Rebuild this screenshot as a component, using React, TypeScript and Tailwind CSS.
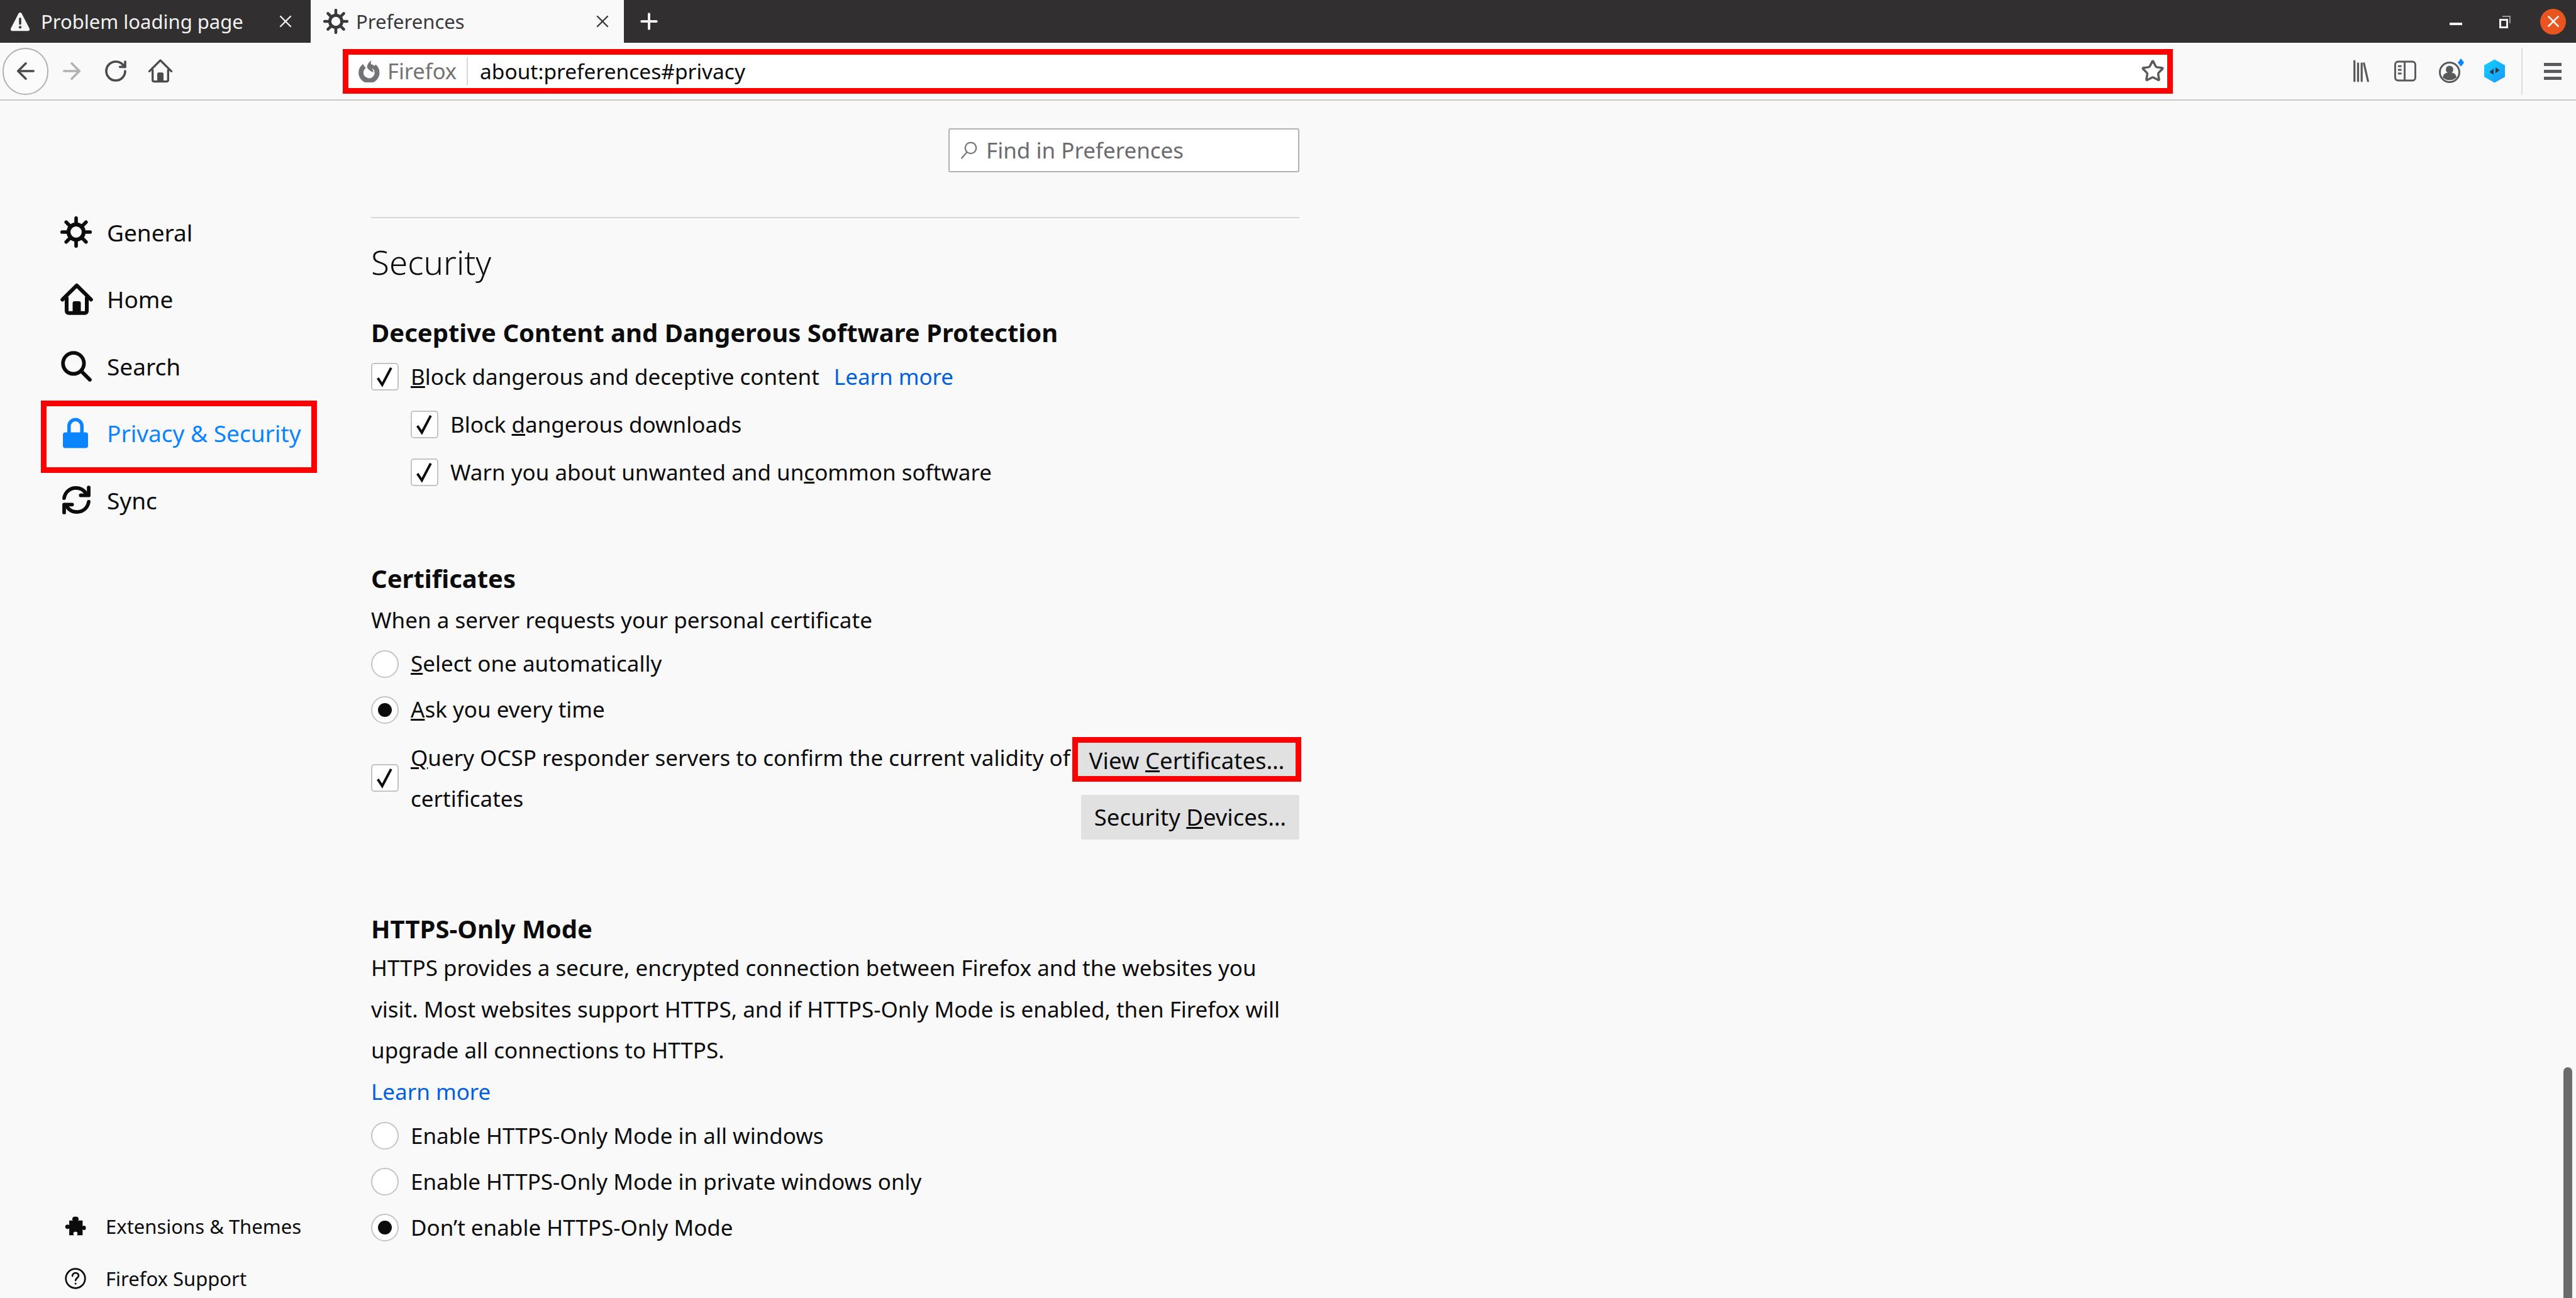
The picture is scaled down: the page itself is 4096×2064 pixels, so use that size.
import React from "react";
import { ArrowLeft, ArrowRight, RotateCw, Star, Plus, X } from "lucide-react";

function GearIcon({ className }: { className?: string }) {
  const rays = [0, 45, 90, 135, 180, 225, 270, 315];
  return (
    <svg viewBox="0 0 24 24" fill="none" stroke="currentColor" className={className}>
      <circle cx="12" cy="12" r="5.800" strokeWidth="3" />
      {rays.map((a) => (
        <line key={a} x1="12" y1="4.500" x2="12" y2="1.300" strokeWidth="2.700" strokeLinecap="round" transform={`rotate(${a} 12 12)`} />
      ))}
    </svg>
  );
}

function HomeIcon({ className, width = 2.8 }: { className?: string; width?: number }) {
  return (
    <svg viewBox="0 0 24 24" fill="none" stroke="currentColor" strokeWidth={width} strokeLinecap="round" strokeLinejoin="round" className={className}>
      <path d="M1.500 12.200 12 1.800l10.500 10.400" />
      <path d="M4.600 11v9.400c0 1 .6 1.600 1.600 1.600h11.600c1 0 1.600-.6 1.600-1.600V11" />
      <path fill="currentColor" strokeWidth="1" d="M9.500 21.500v-6.600c0-.6.4-1 1-1h3c.6 0 1 .4 1 1v6.600z" />
    </svg>
  );
}

function SearchIcon({ className }: { className?: string }) {
  return (
    <svg viewBox="0 0 24 24" fill="none" stroke="currentColor" strokeWidth="2.800" strokeLinecap="round" className={className}>
      <circle cx="10" cy="10" r="8" />
      <line x1="15.800" y1="15.800" x2="22.500" y2="22.500" />
    </svg>
  );
}

function LockIcon({ className }: { className?: string }) {
  return (
    <svg viewBox="0 0 20 24" fill="currentColor" className={className}>
      <path d="M3.500 12V6.500a6.500 6.500 0 0 1 13 0V12h-2.800V6.500a3.700 3.700 0 0 0-7.400 0V12z" />
      <rect x="0" y="11.500" width="20" height="12.500" rx="2" />
    </svg>
  );
}

function SyncIcon({ className }: { className?: string }) {
  return (
    <svg viewBox="0 0 24 24" fill="none" stroke="currentColor" strokeWidth="3" strokeLinecap="round" strokeLinejoin="round" className={className}>
      <path d="M1.800 10.500C2.600 5.400 6.600 2 11.600 2c3.400 0 6.200 1.500 8 4" />
      <path d="M22.200 1.600v6.600h-6.600" />
      <path d="M22.200 13.500c-.8 5.100-4.800 8.500-9.800 8.500-3.400 0-6.200-1.500-8-4" />
      <path d="M1.800 22.400v-6.600h6.600" />
    </svg>
  );
}

function PuzzleIcon({ className }: { className?: string }) {
  return (
    <svg viewBox="0 0 24 24" fill="currentColor" className={className}>
      <path d="M9 5.500H5v5.200c-2-1.300-4.500-.6-4.500 1.800S3 15.600 5 14.300V22h5.300c-1.300-2-.6-4 1.700-4s3 2 1.700 4H20v-6.400c2 1.300 3.700.5 3.700-1.900S22 10.600 20 11.800V5.500h-5c1.300-2 .5-4.500-3-4.500S7.700 3.500 9 5.500z" />
    </svg>
  );
}

function HelpIcon({ className }: { className?: string }) {
  return (
    <svg viewBox="0 0 24 24" fill="none" stroke="currentColor" strokeWidth="1.900" strokeLinecap="round" className={className}>
      <circle cx="12" cy="12" r="10.800" />
      <path d="M8.600 9.200c0-2.200 1.500-3.500 3.500-3.500s3.400 1.300 3.400 3.100c0 2.600-3.400 2.900-3.400 5.400" />
      <circle cx="12.100" cy="17.800" r="1" fill="currentColor" stroke="none" />
    </svg>
  );
}

function WarningIcon({ className }: { className?: string }) {
  return (
    <svg viewBox="0 0 24 24" className={className}>
      <path fill="#f4f4f4" d="M12 1.500c.9 0 1.600.5 2 1.300l9 17.500c.8 1.500-.2 3.200-1.900 3.200H2.900c-1.700 0-2.700-1.700-1.900-3.200l9-17.500c.4-.8 1.100-1.300 2-1.300z" />
      <rect x="10.700" y="7.500" width="2.600" height="8.500" rx="1.200" fill="#312f2f" />
      <circle cx="12" cy="19" r="1.600" fill="#312f2f" />
    </svg>
  );
}

function FirefoxMark({ className }: { className?: string }) {
  return (
    <svg viewBox="0 0 24 24" fill="none" className={className}>
      <path stroke="#737378" strokeWidth="5.500" d="M6.600 6.500A9 9 0 1 0 17.500 6.800" />
      <path fill="#737378" d="M14.500 0c-3 1.800-4.700 4.500-5 8 2 3 4.500 4.700 7.500 5.500l-1.500-4.300c2.500-.4 4 .3 5 1.500-.8-3.500-3.200-5.700-6.500-6.500-.3-1.300 0-2.800.5-4.200z" />
    </svg>
  );
}

function LibraryIcon({ className }: { className?: string }) {
  return (
    <svg viewBox="0 0 36 50" fill="none" stroke="#59595e" strokeWidth="4.500" strokeLinecap="round" className={className}>
      <line x1="3" y1="3" x2="3" y2="47" />
      <line x1="11" y1="8" x2="11" y2="47" />
      <line x1="19" y1="8" x2="19" y2="47" />
      <line x1="24" y1="8" x2="33" y2="47" />
    </svg>
  );
}

function SidebarIcon({ className }: { className?: string }) {
  return (
    <svg viewBox="0 0 36 34" fill="none" stroke="#59595e" strokeWidth="3" className={className}>
      <rect x="1.500" y="1.500" width="33" height="31" rx="5" />
      <line x1="17" y1="2" x2="17" y2="32" />
      <line x1="6" y1="9" x2="12" y2="9" />
      <line x1="6" y1="15" x2="12" y2="15" />
      <line x1="6" y1="21" x2="12" y2="21" />
    </svg>
  );
}

function AccountIcon({ className }: { className?: string }) {
  return (
    <svg viewBox="0 0 40 40" className={className}>
      <circle cx="17" cy="22" r="15.500" fill="none" stroke="#59595e" strokeWidth="3" />
      <circle cx="17" cy="17.500" r="6" fill="#59595e" />
      <path fill="#59595e" d="M6 30c1-6 6-8 11-8s10 2 11 8c-3 3-7 4.500-11 4.500S9 33 6 30z" />
      <path fill="#0a84ff" d="M35 0l5 6.500L35 13l-5-6.500z" />
    </svg>
  );
}

function ExtensionIcon({ className }: { className?: string }) {
  return (
    <svg viewBox="0 0 34 38" className={className}>
      <defs>
        <linearGradient id="extGrad" x1="0" y1="0" x2="1" y2="1">
          <stop offset="0%" stopColor="#12d4ff" />
          <stop offset="100%" stopColor="#1a94ff" />
        </linearGradient>
      </defs>
      <path fill="url(#extGrad)" d="M17 0l17 9.500v19L17 38 0 28.500v-19z" />
      <path fill="#2f3a44" d="M15.500 15v10l-7-4.500zM18.500 13l7 4.500-7 5z" />
    </svg>
  );
}

function Check({ checked = true }: { checked?: boolean }) {
  return (
    <span className="flex h-[44px] w-[44px] shrink-0 items-center justify-center rounded-[5px] border-2 border-[#c4c4c6] bg-white">
      {checked && (
        <svg viewBox="0 0 24 24" fill="none" stroke="#0c0c0d" strokeWidth="2.800" className="h-[34px] w-[34px]">
          <path d="M4 13.500l5 7.500L19 2" />
        </svg>
      )}
    </span>
  );
}

function Radio({ checked = false }: { checked?: boolean }) {
  return (
    <span className="flex h-[44px] w-[44px] shrink-0 items-center justify-center rounded-full border-2 border-[#c4c4c6] bg-white">
      {checked && <span className="h-[22px] w-[22px] rounded-full bg-[#0c0c0d]" />}
    </span>
  );
}

function NavItem({ icon, label, active }: { icon: React.ReactNode; label: string; active?: boolean }) {
  return (
    <div className={`relative flex h-[106.5px] items-center text-[37px] ${active ? "text-[#0a84ff]" : "text-[#0c0c0d]"}`}>
      <span className="ml-[96px] flex w-[74px] shrink-0 items-center">{icon}</span>
      <span>{label}</span>
      {active && <div className="absolute left-[65px] top-[1px] h-[115px] w-[439px] border-[9px] border-[#ff0000]" />}
    </div>
  );
}

function OptionRow({ children, indent }: { children: React.ReactNode; indent?: boolean }) {
  return <div className={`flex h-[73px] items-center gap-[19px] whitespace-nowrap ${indent ? "pl-[63px]" : ""}`}>{children}</div>;
}

const Learn = ({ className }: { className?: string }) => <span className={`text-[#0060df] ${className ?? ""}`}>Learn more</span>;

export default function App() {
  return (
    <div className="relative flex h-[2064px] w-[4096px] flex-col overflow-hidden bg-[#f9f9fa] font-['Noto_Sans',sans-serif] text-[35px] text-[#0c0c0d]">
      {/* tab strip */}
      <div className="flex h-[68px] shrink-0 items-stretch bg-[#312f2f] text-[31px]">
        <div className="flex w-[494px] items-center pl-[16px] text-[#f2f2f2]">
          <WarningIcon className="h-[32px] w-[32px]" />
          <span className="ml-[17px] whitespace-nowrap">Problem loading page</span>
          <X className="ml-auto mr-[24px] h-[32px] w-[32px]" strokeWidth={1.800} />
        </div>
        <div className="flex w-[498px] items-center bg-[#f9f9fa] pl-[20px] text-[#38383d]">
          <GearIcon className="h-[40px] w-[40px]" />
          <span className="ml-[12px]">Preferences</span>
          <X className="ml-auto mr-[18px] h-[32px] w-[32px]" strokeWidth={1.800} />
        </div>
        <div className="flex items-center pl-[20px] text-[#f2f2f2]">
          <Plus className="h-[40px] w-[40px]" strokeWidth={2.400} />
        </div>
        <div className="ml-auto flex items-center pr-[16px]">
          <div className="mr-[59px] mt-[8px] h-[4px] w-[20px] bg-[#f2f2f2]" />
          <div className="relative mr-[51px] mt-[6px] h-[15px] w-[14px] border-[3px] border-[#f2f2f2] bg-[#312f2f]">
            <div className="absolute left-[2px] top-[-8px] h-[12px] w-[13px] border-r-2 border-t-2 border-[#999999]" />
          </div>
          <div className="flex h-[41px] w-[41px] items-center justify-center rounded-full bg-[#e95420] text-white">
            <X className="h-[30px] w-[30px]" strokeWidth={2} />
          </div>
        </div>
      </div>

      {/* toolbar */}
      <div className="flex h-[92px] shrink-0 items-center border-b-2 border-[#c9c9cb] bg-[#f9f9fa] text-[#4a4a4f]">
        <div className="ml-[4px] flex h-[75px] w-[73px] shrink-0 items-center justify-center rounded-full border-2 border-[#b1b1b3] bg-[#fbfbfb]">
          <ArrowLeft className="h-[42px] w-[42px]" strokeWidth={2} />
        </div>
        <ArrowRight className="ml-[16px] h-[42px] w-[42px] text-[#b1b1b3]" strokeWidth={2} />
        <RotateCw className="ml-[29px] h-[40px] w-[40px]" strokeWidth={2.200} />
        <HomeIcon className="ml-[31px] h-[40px] w-[40px]" width={2} />
        <div className="ml-[270px] flex h-[71px] w-[2910px] shrink-0 items-center border-[9px] border-[#ff0000] bg-white">
          <FirefoxMark className="ml-[16px] h-[36px] w-[34px] shrink-0" />
          <span className="ml-[12px] w-[108px] whitespace-nowrap text-[34.500px] text-[#737373]">Firefox</span>
          <div className="ml-[18px] h-[44px] w-[2px] bg-[#d7d7db]" />
          <span className="ml-[19px] text-[33.500px] text-[#0c0c0d]">about:preferences#privacy</span>
          <Star className="ml-auto mr-[4px] h-[38px] w-[38px] text-[#59595e]" strokeWidth={2.200} />
        </div>
        <LibraryIcon className="ml-[283px] h-[36px] w-[33px] shrink-0" />
        <SidebarIcon className="ml-[36px] h-[34px] w-[35px] shrink-0" />
        <AccountIcon className="ml-[36px] h-[40px] w-[40px] shrink-0" />
        <ExtensionIcon className="ml-[32px] h-[38px] w-[33px] shrink-0" />
        <div className="ml-[26px] h-[75px] w-[2px] bg-[#dcdcde]" />
        <div className="ml-[34px] flex h-[27px] w-[28px] shrink-0 flex-col justify-between">
          <div className="h-[5px] bg-[#59595e]" />
          <div className="h-[5px] bg-[#59595e]" />
          <div className="h-[5px] bg-[#59595e]" />
        </div>
      </div>

      {/* page body */}
      <div className="flex min-h-0 flex-1">
        <nav className="flex w-[590px] shrink-0 flex-col justify-between pt-[156px]">
          <div>
            <NavItem icon={<GearIcon className="h-[50px] w-[50px]" />} label="General" />
            <NavItem icon={<HomeIcon className="h-[52px] w-[52px]" />} label="Home" />
            <NavItem icon={<SearchIcon className="h-[50px] w-[50px]" />} label="Search" />
            <NavItem icon={<LockIcon className="ml-[4px] h-[49px] w-[40px]" />} label="Privacy & Security" active />
            <NavItem icon={<SyncIcon className="ml-[2px] h-[46px] w-[47px]" />} label="Sync" />
          </div>
          <div className="text-[31px]">
            <div className="mb-[10px] flex h-[72px] items-center pl-[103px] pt-[4px]">
              <PuzzleIcon className="h-[34px] w-[34px] shrink-0" />
              <span className="ml-[31px] whitespace-nowrap">Extensions &amp; Themes</span>
            </div>
            <div className="flex h-[70px] items-center pl-[103px] pt-[8px]">
              <HelpIcon className="h-[34px] w-[34px] shrink-0" />
              <span className="ml-[31px] whitespace-nowrap">Firefox Support</span>
            </div>
          </div>
        </nav>

        <main className="flex w-[1476px] shrink-0 flex-col">
          <div className="mt-[44px] flex h-[70px] w-[558px] shrink-0 items-center self-end rounded-[3px] border-2 border-[#b1b1b3] bg-white pl-[16px] text-[#6b6b6f]">
            <svg viewBox="0 0 24 24" fill="none" stroke="#737378" strokeWidth="1.800" strokeLinecap="round" className="h-[30px] w-[30px] shrink-0">
              <circle cx="14" cy="9" r="7" />
              <line x1="9" y1="14.500" x2="2.500" y2="22" />
            </svg>
            <span className="ml-[12px] whitespace-nowrap">Find in Preferences</span>
          </div>
          <div className="mt-[71px] h-[2px] shrink-0 bg-[#d7d7db]" />
          <h1 className="mt-[40px] h-[62px] shrink-0 text-[53px] font-light leading-[60px] text-[#0c0c0d]">Security</h1>

          <h2 className="mt-[55px] h-[50px] shrink-0 text-[40px] font-bold leading-[50px]">Deceptive Content and Dangerous Software Protection</h2>
          <div className="mt-[7px]">
            <div className="flex h-[76px] items-center gap-[19px] whitespace-nowrap">
              <Check />
              <span>
                <span className="underline">B</span>lock dangerous and deceptive content
              </span>
              <Learn className="ml-[4px]" />
            </div>
            <div className="flex h-[76px] items-center gap-[19px] whitespace-nowrap pl-[63px]">
              <Check />
              <span>
                Block <span className="underline">d</span>angerous downloads
              </span>
            </div>
            <div className="flex h-[76px] items-center gap-[19px] whitespace-nowrap pl-[63px]">
              <Check />
              <span>
                Warn you about unwanted and un<span className="underline">c</span>ommon software
              </span>
            </div>
          </div>

          <h2 className="mt-[106px] h-[50px] shrink-0 text-[40px] font-bold leading-[50px]">Certificates</h2>
          <p className="mt-[16px] h-[50px] shrink-0 leading-[50px]">When a server requests your personal certificate</p>
          <div className="mt-[8px]">
            <OptionRow>
              <Radio />
              <span>
                <span className="underline">S</span>elect one automatically
              </span>
            </OptionRow>
            <OptionRow>
              <Radio checked />
              <span>
                <span className="underline">A</span>sk you every time
              </span>
            </OptionRow>
          </div>
          <div className="mt-[7px] flex shrink-0 items-start justify-between">
            <div className="flex h-[130px] items-center gap-[19px]">
              <Check />
              <span className="whitespace-nowrap leading-[65px]">
                <span className="underline">Q</span>uery OCSP responder servers to confirm the current validity of
                <br />
                certificates
              </span>
            </div>
            <div className="-mr-[3px] flex flex-col items-end gap-[21px] text-[36.500px]">
              <div className="flex h-[71px] w-[364px] items-center justify-center border-[9px] border-[#ff0000] bg-[#e1e1e2] pt-[4px] whitespace-nowrap">
                <span>
                  View <span className="underline">C</span>ertificates…
                </span>
              </div>
              <div className="mr-[3px] flex h-[71px] w-[347px] items-center justify-center rounded-[3px] bg-[#e1e1e2] whitespace-nowrap">
                <span>
                  Security <span className="underline">D</span>evices…
                </span>
              </div>
            </div>
          </div>

          <h2 className="mt-[117px] h-[50px] shrink-0 text-[40px] font-bold leading-[50px]">HTTPS-Only Mode</h2>
          <p className="mt-[4px] shrink-0 whitespace-nowrap leading-[65.5px]">
            HTTPS provides a secure, encrypted connection between Firefox and the websites you
            <br />
            visit. Most websites support HTTPS, and if HTTPS-Only Mode is enabled, then Firefox will
            <br />
            upgrade all connections to HTTPS.
          </p>
          <div className="h-[65px] shrink-0 leading-[65px]">
            <Learn />
          </div>
          <div className="mt-[2px]">
            <OptionRow>
              <Radio />
              <span>Enable HTTPS-Only Mode in all windows</span>
            </OptionRow>
            <OptionRow>
              <Radio />
              <span>Enable HTTPS-Only Mode in private windows only</span>
            </OptionRow>
            <OptionRow>
              <Radio checked />
              <span>Don’t enable HTTPS-Only Mode</span>
            </OptionRow>
          </div>
        </main>
      </div>

      {/* overlay scrollbar thumb */}
      <div className="absolute bottom-0 right-[6px] top-[1697px] w-[14px] rounded-t-full bg-[#6b6b6b]" />
    </div>
  );
}
